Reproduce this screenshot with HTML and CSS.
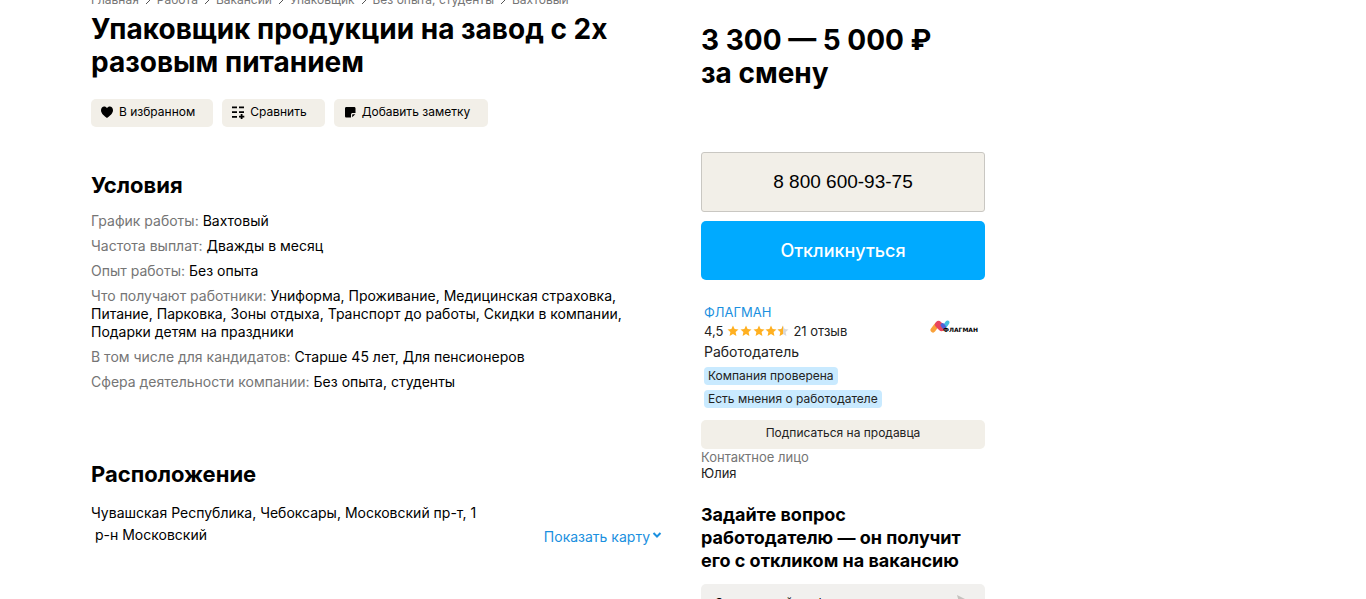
FILE: index.html
```
<!DOCTYPE html>
<html lang="ru">

<head>
    <meta charset="UTF-8">
    <meta name="viewport" content="width=device-width, initial-scale=1.0">
    <title>Упаковщик продукции на завод</title>
    <link rel="stylesheet" href="styles.css">
</head>

<body>
    <div class="container">
        <main class="content">
            <nav class="breadcrumbs">
                <a href="#">Главная</a>
                <svg viewBox="0 0 6 10"><path d="M1 1l4 4-4 4"/></svg>
                <a href="#">Работа</a>
                <svg viewBox="0 0 6 10"><path d="M1 1l4 4-4 4"/></svg>
                <a href="#">Вакансии</a>
                <svg viewBox="0 0 6 10"><path d="M1 1l4 4-4 4"/></svg>
                <a href="#">Упаковщик</a>
                <svg viewBox="0 0 6 10"><path d="M1 1l4 4-4 4"/></svg>
                <a href="#">Без опыта, студенты</a>
                <svg viewBox="0 0 6 10"><path d="M1 1l4 4-4 4"/></svg>
                <a href="#">Вахтовый</a>
            </nav>
            <h1>Упаковщик продукции на завод с 2х разовым питанием</h1>
            <div class="actions">
                <button class="action">
                    <svg class="icon" viewBox="0 0 14 14"><path d="M7 13C4.500 11 1 8.500 1 5.200 1 3 2.500 1.500 4.200 1.500 5.400 1.500 6.400 2.100 7 3.100 7.600 2.100 8.600 1.500 9.800 1.500 11.500 1.500 13 3 13 5.200 13 8.500 9.500 11 7 13z"/></svg>
                    В избранном
                </button>
                <button class="action">
                    <svg class="icon" viewBox="0 0 14 14"><path d="M1 1.500h5v1.700H1zM8 1.500h5v1.700H8zM1 6.200h5v1.700H1zM8 6.200h5v1.700H8zM1 11h5v1.700H1zM9.700 9h1.800v1.800h1.800v1.800h-1.800V14H9.700v-1.400H8v-1.800h1.700z"/></svg>
                    Сравнить
                </button>
                <button class="action">
                    <svg class="icon" viewBox="0 0 14 14"><path d="M2 3.500C2 2.500 2.500 2 3.500 2h7.500c1 0 1.500.500 1.500 1.500V8H10C8.500 8 8 8.500 8 10v2.500H3.500C2.500 12.500 2 12 2 11zM9.200 12.300V10c0-.600.200-.800.800-.800h2.300z"/></svg>
                    Добавить заметку
                </button>
            </div>

            <section class="conditions">
                <h2>Условия</h2>
                <ul class="params">
                    <li><span>График работы:</span> Вахтовый</li>
                    <li><span>Частота выплат:</span> Дважды в месяц</li>
                    <li><span>Опыт работы:</span> Без опыта</li>
                    <li><span>Что получают работники:</span> Униформа, Проживание, Медицинская страховка, Питание, Парковка, Зоны отдыха, Транспорт до работы, Скидки в компании, Подарки детям на праздники</li>
                    <li><span>В том числе для кандидатов:</span> Старше 45 лет, Для пенсионеров</li>
                    <li><span>Сфера деятельности компании:</span> Без опыта, студенты</li>
                </ul>
            </section>

            <section class="location">
                <h2>Расположение</h2>
                <div class="address">
                    <div>
                        <p>Чувашская Республика, Чебоксары, Московский пр-т, 1</p>
                        <p class="district">р-н Московский</p>
                    </div>
                    <a class="show-map" href="#">Показать карту<svg viewBox="0 0 10 8"><path d="M1.500 2L5 5.500 8.500 2"/></svg></a>
                </div>
            </section>
        </main>

        <aside class="sidebar">
            <p class="price">3 300 — 5 000 ₽<br>за смену</p>
            <button class="phone">8 800 600-93-75</button>
            <button class="respond">Откликнуться</button>

            <div class="seller">
                <div class="seller-info">
                    <a class="seller-name" href="#">ФЛАГМАН</a>
                    <div class="rating">
                        <span>4,5</span>
                        <svg class="stars" viewBox="0 0 62 12">
                            <defs>
                                <path id="star" d="M6 .500l1.600 3.600 3.900.400-2.900 2.600.800 3.900L6 9 2.600 11l.800-3.900L.500 4.500l3.900-.400z"/>
                                <clipPath id="half"><path d="M0 0h6v12H0z"/></clipPath>
                            </defs>
                            <use href="#star"/>
                            <use href="#star" x="13"/>
                            <use href="#star" x="26"/>
                            <use href="#star" x="38"/>
                            <use href="#star" x="50" class="empty"/>
                            <g transform="translate(50)"><use href="#star" clip-path="url(#half)"/></g>
                        </svg>
                        <span>21 отзыв</span>
                    </div>
                    <p class="seller-type">Работодатель</p>
                    <span class="badge">Компания проверена</span>
                    <span class="badge">Есть мнения о работодателе</span>
                </div>
                <svg class="logo" viewBox="0 0 50 16">
                    <g stroke-linecap="round" fill="none">
                        <path d="M3 11L6 7" stroke="#f9a13a" stroke-width="5"/>
                        <path d="M15 7L17.500 3.500" stroke="#45bfe0" stroke-width="4"/>
                        <path d="M8.500 5.500l3 3" stroke="#e8455f" stroke-width="7"/>
                        <path d="M12.500 6l1.500 2" stroke="#4b62d8" stroke-width="4"/>
                    </g>
                    <text x="13" y="13">ФЛАГМАН</text>
                </svg>
            </div>

            <button class="subscribe">Подписаться на продавца</button>
            <p class="contact-label">Контактное лицо</p>
            <p class="contact-name">Юлия</p>

            <h3>Задайте вопрос<br>работодателю — он получит его с откликом на вакансию</h3>
            <div class="question">
                <input type="text" aria-label="Вопрос работодателю" value="Это сменный график">
                <button class="send" aria-label="Отправить"><svg viewBox="0 0 14 14"><path d="M0 0l14 7-14 7 2-7z"/></svg></button>
            </div>
        </aside>
    </div>
</body>

</html>
```
FILE: styles.css
```
* {
    margin: 0;
    padding: 0;
    box-sizing: border-box;
}

body {
    height: 100vh;
    overflow: hidden;
    background: #fff;
    color: #000;
    font-family: Inter, "Liberation Sans", sans-serif;
    font-size: 14px;
    line-height: 18px;
}

a {
    color: #1a90e0;
    text-decoration: none;
}

button {
    border: none;
    cursor: pointer;
    font-family: inherit;
    color: #000;
}

.container {
    display: grid;
    grid-template-columns: minmax(0, 571fr) minmax(0, 284fr);
    column-gap: 39px;
    max-width: 985px;
    padding-left: 91px;
}

.breadcrumbs {
    display: flex;
    align-items: center;
    gap: 6px;
    margin-top: -8px;
    font-size: 12px;
    line-height: 16px;
}

.breadcrumbs a {
    color: #757575;
}

.breadcrumbs svg {
    width: 6px;
    height: 10px;
    fill: none;
    stroke: #555;
}

h1,
.price {
    font-size: 28px;
    line-height: 33px;
    font-weight: 700;
}

h1 {
    margin-top: 5px;
}

.actions {
    display: flex;
    gap: 9px;
    margin-top: 20px;
}

.action {
    display: flex;
    align-items: center;
    gap: 5px;
    height: 28px;
    padding: 0 18px 3px 9px;
    border-radius: 5px;
    background: #f2efe8;
    font-size: 12px;
}

.icon {
    width: 14px;
    height: 14px;
}

h2 {
    font-size: 22px;
    line-height: 28px;
    font-weight: 700;
}

.conditions {
    margin-top: 44px;
}

.params {
    margin-top: 13px;
    list-style: none;
}

.params li {
    margin-bottom: 7px;
}

.params span {
    color: #757575;
}

.location {
    margin-top: 69px;
}

.address {
    display: flex;
    justify-content: space-between;
    align-items: flex-end;
    margin-top: 14px;
}

.address p {
    line-height: 22px;
}

.district {
    padding-left: 4px;
}

.show-map svg {
    width: 10px;
    height: 8px;
    margin-left: 2px;
    vertical-align: 3px;
    fill: none;
    stroke: #1a90e0;
    stroke-width: 2;
}

.price {
    margin-top: 24px;
}

.phone,
.respond {
    display: block;
    width: 100%;
}

.phone {
    height: 60px;
    margin-top: 62px;
    border: 1px solid #c9c7c2;
    border-radius: 3px;
    background: #f2efe8;
    font-family: "Liberation Sans", sans-serif;
    font-size: 19px;
}

.respond {
    height: 59px;
    margin-top: 9px;
    border-radius: 5px;
    background: #00aaff;
    color: #fff;
    font-size: 18px;
    font-weight: 500;
}

.seller {
    display: flex;
    justify-content: space-between;
    margin-top: 23px;
    padding: 0 5px 0 3px;
}

.seller-info {
    display: flex;
    flex-direction: column;
    align-items: flex-start;
}

.seller-name {
    font-size: 13px;
}

.rating {
    display: flex;
    align-items: center;
    gap: 4px;
    line-height: 20px;
    font-size: 13px;
    color: #222;
}

.stars {
    width: 62px;
    height: 12px;
    fill: #ffb021;
}

.stars .empty {
    fill: #d9d9d9;
}

.seller-type {
    margin-bottom: 5px;
    line-height: 21px;
    color: #222;
}

.badge {
    margin-bottom: 5px;
    padding: 0 4px;
    border-radius: 4px;
    background: #c9eaff;
    color: #222;
    font-size: 12px;
}

.logo {
    width: 50px;
    height: 16px;
    margin-top: 16px;
}

.logo text {
    font-family: "DejaVu Sans", sans-serif;
    font-size: 6px;
    font-weight: 700;
}

.subscribe {
    width: 100%;
    height: 29px;
    margin-top: 7px;
    padding-bottom: 4px;
    border-radius: 5px;
    background: #f2efe8;
    color: #222;
    font-size: 12px;
}

.contact-label,
.contact-name {
    font-size: 13px;
    line-height: 16px;
    color: #222;
}

.contact-label {
    color: #757575;
}

h3 {
    margin-top: 22px;
    font-size: 18px;
    line-height: 23px;
    font-weight: 700;
}

.question {
    display: flex;
    align-items: center;
    height: 36px;
    margin-top: 12px;
    padding: 0 14px;
    border-radius: 5px;
    background: #f1f0ee;
}

.question input {
    flex: 1;
    min-width: 0;
    border: none;
    outline: none;
    background: none;
    font-family: inherit;
    font-size: 12px;
}

.send {
    background: none;
}

.send svg {
    display: block;
    width: 14px;
    height: 14px;
    fill: #c4c2be;
}
```
